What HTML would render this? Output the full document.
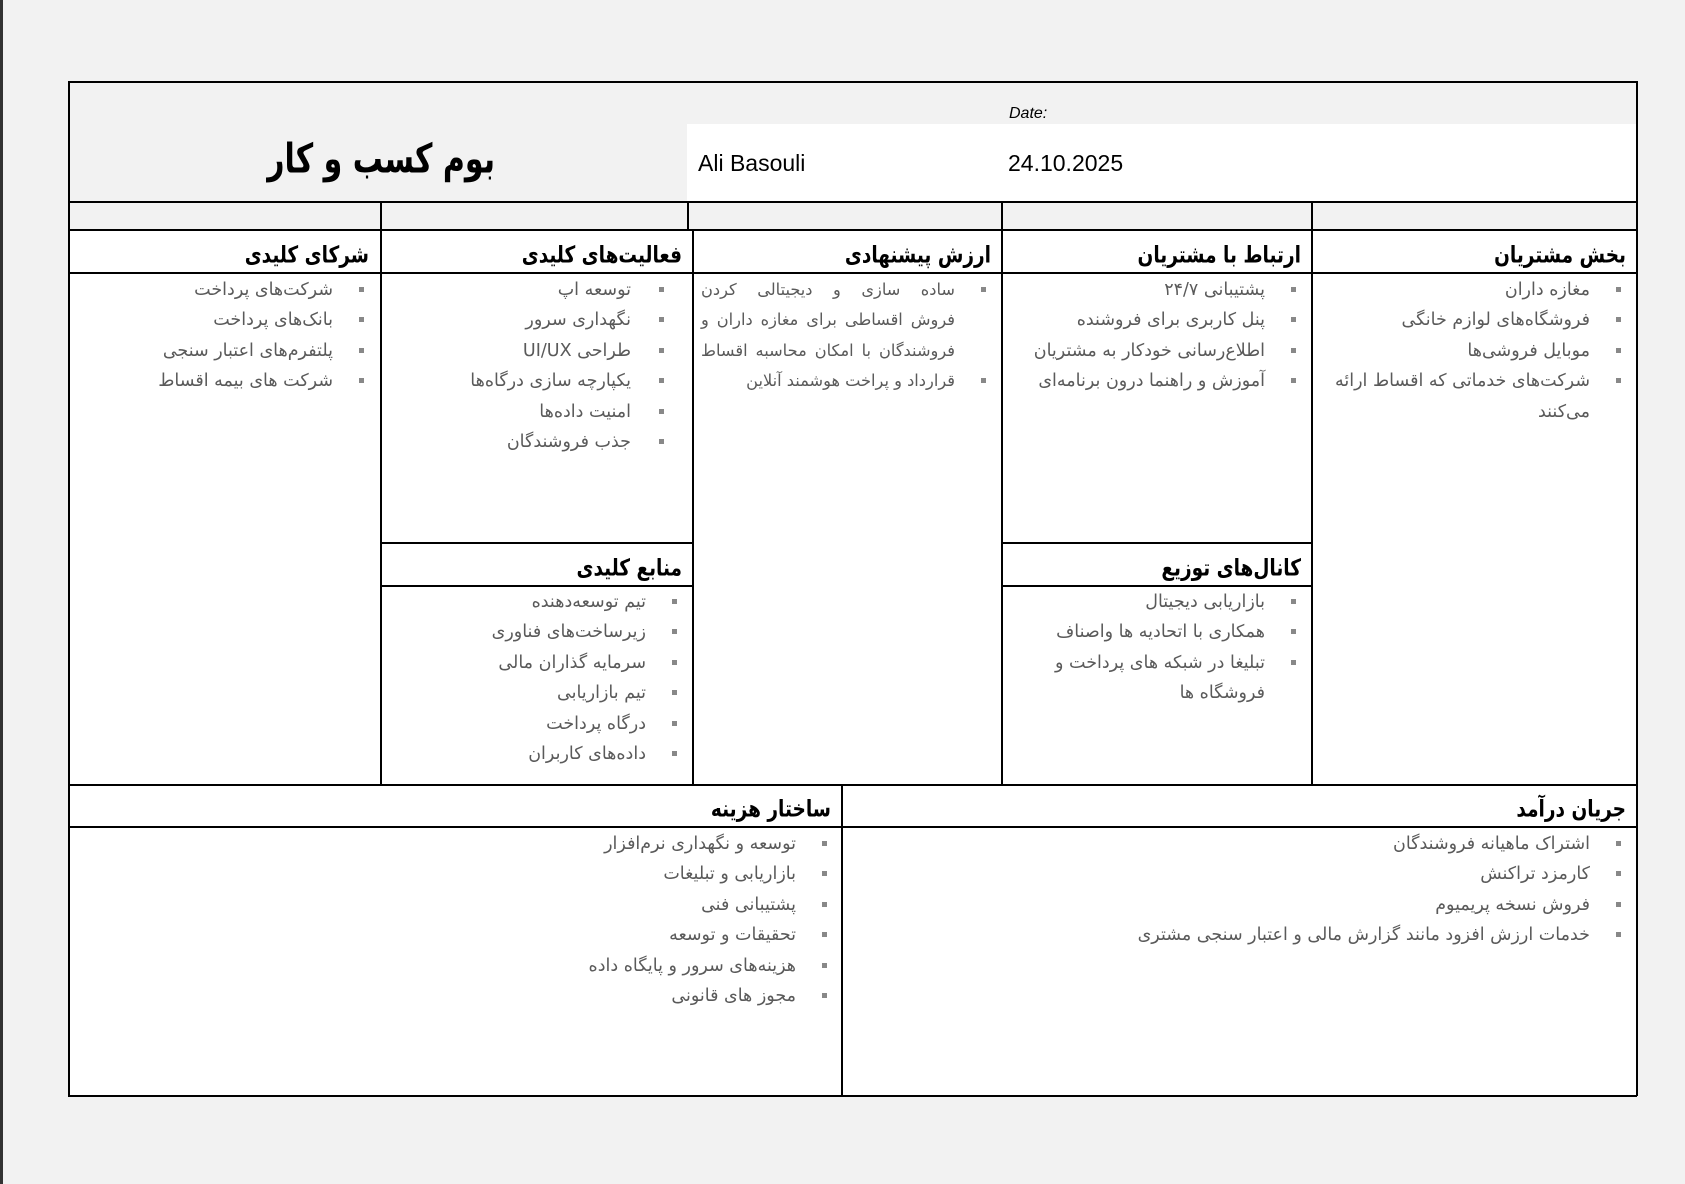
<!DOCTYPE html>
<html><head><meta charset="utf-8">
<style>
body{margin:0;width:1685px;height:1184px;background:#f2f2f2;position:relative;overflow:hidden;font-family:"DejaVu Sans","Liberation Sans",sans-serif;}
.abs{position:absolute}
.edge{left:0;top:0;width:3px;height:1184px;background:#333}
.h{position:absolute;background:#000;height:1.5px}
.v{position:absolute;background:#000;width:1.5px}
.wbox{background:#fff}
.hd{position:absolute;direction:rtl;text-align:right;font-weight:bold;font-size:18.5px;color:#000;white-space:nowrap;transform:scaleY(1.25);transform-origin:right center}
.ls{position:absolute;direction:rtl;font-size:17.5px;color:#5a5a5a;line-height:30.4px;white-space:nowrap}
.ls div{position:relative;text-align:right}
.ls div:before{content:"";position:absolute;width:5px;height:5px;background:#888;top:12px}
</style></head><body>
<div class="abs edge"></div>
<div class="abs wbox" style="left:687px;top:124px;width:949px;height:78px"></div>
<div class="abs wbox" style="left:68px;top:230px;width:1568px;height:865px"></div>

<div class="h" style="left:68px;top:81px;width:1569px"></div>
<div class="h" style="left:68px;top:201px;width:1569px"></div>
<div class="h" style="left:68px;top:229px;width:1569px"></div>
<div class="h" style="left:68px;top:272px;width:1569px"></div>
<div class="h" style="left:380px;top:542px;width:312px"></div>
<div class="h" style="left:380px;top:585px;width:312px"></div>
<div class="h" style="left:1001px;top:542px;width:310px"></div>
<div class="h" style="left:1001px;top:585px;width:310px"></div>
<div class="h" style="left:68px;top:784px;width:1569px"></div>
<div class="h" style="left:68px;top:826px;width:1569px"></div>
<div class="h" style="left:68px;top:1095px;width:1569px"></div>
<div class="v" style="left:68px;top:81px;height:1015px"></div>
<div class="v" style="left:1636px;top:81px;height:1015px"></div>
<div class="v" style="left:380px;top:201px;height:583px"></div>
<div class="v" style="left:687px;top:201px;height:29px"></div>
<div class="v" style="left:692px;top:229px;height:555px"></div>
<div class="v" style="left:1001px;top:201px;height:583px"></div>
<div class="v" style="left:1311px;top:201px;height:583px"></div>
<div class="v" style="left:841px;top:784px;height:311px"></div>

<div class="hd" style="right:1190px;top:142px;font-size:30px;transform:scaleY(1.35)">بوم کسب و کار</div>
<div class="abs" style="left:1009px;top:105px;font:italic 16px 'Liberation Sans',sans-serif">Date:</div>
<div class="abs" style="left:698px;top:150px;font:23px 'Liberation Sans',sans-serif">Ali Basouli</div>
<div class="abs" style="left:1008px;top:150px;font:23px 'Liberation Sans',sans-serif">24.10.2025</div>

<div class="hd" style="right:1316px;top:245px">شرکای کلیدی</div>
<div class="hd" style="right:1003px;top:245px">فعالیت‌های کلیدی</div>
<div class="hd" style="right:694px;top:245px">ارزش پیشنهادی</div>
<div class="hd" style="right:384px;top:245px">ارتباط با مشتریان</div>
<div class="hd" style="right:59px;top:245px">بخش مشتریان</div>
<div class="hd" style="right:1003px;top:558px">منابع کلیدی</div>
<div class="hd" style="right:384px;top:558px">کانال‌های توزیع</div>
<div class="hd" style="right:854px;top:799px">ساختار هزینه</div>
<div class="hd" style="right:59px;top:799px">جریان درآمد</div>

<div class="ls" style="right:1352px;top:275px">
<div>شرکت‌های پرداخت</div><div>بانک‌های پرداخت</div><div>پلتفرم‌های اعتبار سنجی</div><div>شرکت های بیمه اقساط</div></div>
<div class="ls" style="right:1054px;top:275px">
<div>توسعه اپ</div><div>نگهداری سرور</div><div>طراحی UI/UX</div><div>یکپارچه سازی درگاه‌ها</div><div>امنیت داده‌ها</div><div>جذب فروشندگان</div></div>
<div class="ls" style="right:730px;top:275px;width:254px;font-size:16.2px">
<div style="text-align:justify;text-align-last:justify">ساده سازی و دیجیتالی کردن</div>
<div style="text-align:justify;text-align-last:justify" class="nb">فروش اقساطی برای مغازه داران و</div>
<div style="text-align:justify;text-align-last:justify" class="nb">فروشندگان با امکان محاسبه اقساط</div>
<div>قرارداد و پراخت هوشمند آنلاین</div></div>
<div class="ls" style="right:420px;top:275px">
<div>پشتیبانی ۲۴/۷</div><div>پنل کاربری برای فروشنده</div><div>اطلاع‌رسانی خودکار به مشتریان</div><div>آموزش و راهنما درون برنامه‌ای</div></div>
<div class="ls" style="right:95px;top:275px">
<div>مغازه داران</div><div>فروشگاه‌های لوازم خانگی</div><div>موبایل فروشی‌ها</div><div>شرکت‌های خدماتی که اقساط ارائه</div><div class="nb">می‌کنند</div></div>
<div class="ls" style="right:1039px;top:587px">
<div>تیم توسعه‌دهنده</div><div>زیرساخت‌های فناوری</div><div>سرمایه گذاران مالی</div><div>تیم بازاریابی</div><div>درگاه پرداخت</div><div>داده‌های کاربران</div></div>
<div class="ls" style="right:420px;top:587px">
<div>بازاریابی دیجیتال</div><div>همکاری با اتحادیه ها واصناف</div><div>تبلیغا در شبکه های پرداخت و</div><div class="nb">فروشگاه ها</div></div>
<div class="ls" style="right:889px;top:829px">
<div>توسعه و نگهداری نرم‌افزار</div><div>بازاریابی و تبلیغات</div><div>پشتیبانی فنی</div><div>تحقیقات و توسعه</div><div>هزینه‌های سرور و پایگاه داده</div><div>مجوز های قانونی</div></div>
<div class="ls" style="right:95px;top:829px">
<div>اشتراک ماهیانه فروشندگان</div><div>کارمزد تراکنش</div><div>فروش نسخه پریمیوم</div><div>خدمات ارزش افزود مانند گزارش مالی و اعتبار سنجی مشتری</div></div>

<style>
.ls div:before{right:-31px}
.ls .nb:before{display:none}
.ls[style*="right:1054px"] div:before{right:-33px}
</style>
</body></html>
